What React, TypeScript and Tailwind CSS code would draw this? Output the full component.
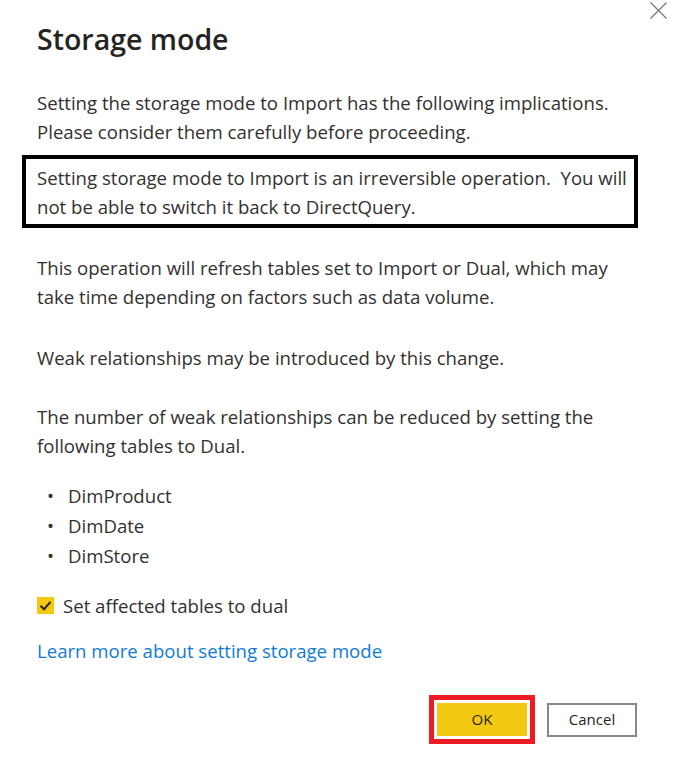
export default function App() {
  return (
    <div
      className="relative h-[766px] w-[678px] overflow-hidden bg-white text-[#323130]"
      style={{ fontFamily: '"Open Sans", "Noto Sans", sans-serif' }}
    >
      <button className="absolute left-[649px] top-[1px] h-[19px] w-[19px]" aria-label="Close">
        <svg viewBox="0 0 19 19" className="h-[19px] w-[19px]">
          <path d="M1.5 1.5 L17.5 17.5 M17.5 1.5 L1.5 17.5" stroke="#797775" strokeWidth="1.2" fill="none" />
        </svg>
      </button>

      <div className="flex flex-col pl-[37px] pr-[37px] pt-[21px]">
        <h1 className="text-[28.5px] font-semibold leading-[36px] text-[#252423]">Storage mode</h1>

        <p className="mt-[31px] text-[18.6px] leading-[29px]">
          Setting the storage mode to Import has the following implications.
          <br />
          Please consider them carefully before proceeding.
        </p>

        <div className="-ml-[15px] mr-[3px] mt-[9px] border-4 border-black pb-[3px] pl-[11px] pt-[4px]">
          <p className="whitespace-nowrap text-[18.6px] leading-[29px]">
            Setting storage mode to Import is an irreversible operation.&nbsp; You will
            <br />
            not be able to switch it back to DirectQuery.
          </p>
        </div>

        <p className="mt-[25px] text-[18.6px] leading-[29px]">
          This operation will refresh tables set to Import or Dual, which may
          <br />
          take time depending on factors such as data volume.
        </p>

        <p className="mt-[32px] text-[18.6px] leading-[29px]">Weak relationships may be introduced by this change.</p>

        <p className="mt-[30px] text-[18.6px] leading-[29px]">
          The number of weak relationships can be reduced by setting the
          <br />
          following tables to Dual.
        </p>

        <ul className="mt-[21px] text-[18.6px] leading-[30px]">
          {["DimProduct", "DimDate", "DimStore"].map((name) => (
            <li key={name} className="flex">
              <span className="w-[31px] pl-[10px]">•</span>
              <span>{name}</span>
            </li>
          ))}
        </ul>

        <label className="mt-[20px] flex h-[29px] items-center gap-[9px] text-[18.6px]">
          <span className="flex h-[17px] w-[17px] items-center justify-center bg-[#f2c811]">
            <svg viewBox="0 0 17 17" className="h-[17px] w-[17px]">
              <path d="M3.5 8.8 L7 12.2 L13.5 4.8" stroke="#252423" strokeWidth="2" fill="none" />
            </svg>
          </span>
          <span>Set affected tables to dual</span>
        </label>

        <a className="mt-[16px] text-[18.6px] leading-[29px] text-[#0f7bd7]" href="#">
          Learn more about setting storage mode
        </a>

        <div className="mt-[30px] flex items-center justify-end gap-[12px] pr-[4px]">
          <div className="border-[5px] border-[#ed1c24] p-[3px]">
            <button className="flex h-[33px] w-[90px] items-center justify-center bg-[#f2c811] text-[15px] text-[#252423]">
              OK
            </button>
          </div>
          <button className="flex h-[34px] w-[90px] items-center justify-center border-2 border-[#8a8886] bg-white text-[15px] text-[#252423]">
            Cancel
          </button>
        </div>
      </div>
    </div>
  );
}
